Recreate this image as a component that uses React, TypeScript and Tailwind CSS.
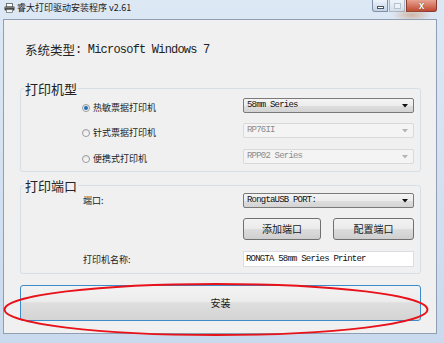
import React from "react";

const cjk = "font-['Noto_Sans_CJK_SC',sans-serif]";
const mono = "font-mono";

function PrinterIcon() {
  return (
    <svg width="11" height="10" viewBox="0 0 11 10">
      <rect x="2.5" y="0.5" width="6" height="3.5" fill="#ffffff" stroke="#5a5a5a" strokeWidth="0.8" />
      <rect x="0.5" y="3.5" width="10" height="4" rx="1" fill="#3c3c3c" />
      <rect x="1" y="4" width="9" height="1.2" fill="#7c7c7c" />
      <rect x="2.5" y="6.5" width="6" height="3" fill="#f4f4f4" stroke="#6a6a6a" strokeWidth="0.7" />
    </svg>
  );
}

function Combo({ value, disabled }: { value: string; disabled?: boolean }) {
  return (
    <div
      className={
        disabled
          ? "flex h-[15px] w-[171px] items-center justify-between rounded-[2px] border border-[#d9d9d9] bg-[#f4f4f4] pl-[3px] pr-[5px]"
          : "flex h-[15px] w-[171px] items-center justify-between rounded-[2px] border border-[#7a7a7a] bg-[linear-gradient(#f4f4f4_0%,#ececec_50%,#dfdfdf_50%,#d3d3d3_100%)] pl-[3px] pr-[5px]"
      }
    >
      <span
        className={
          disabled
            ? `${mono} text-[9px] leading-[13px] tracking-[-0.8px] text-[#8c8c8c]`
            : `${mono} text-[9px] leading-[13px] tracking-[-0.8px] text-[#111111]`
        }
      >
        {value}
      </span>
      <svg width="6" height="4" viewBox="0 0 6 4">
        <path d="M0 0h6L3 3.5z" fill={disabled ? "#b4b4b4" : "#111111"} />
      </svg>
    </div>
  );
}

function Radio({ checked, label }: { checked?: boolean; label: string }) {
  return (
    <div className="flex h-[15px] flex-1 translate-y-[2px] items-center gap-[3px] pl-[58px]">
      <span className="flex h-[8px] w-[8px] items-center justify-center rounded-full border border-[#9a9a9a] bg-[linear-gradient(#e6e6e6,#fbfbfb)]">
        {checked && <span className="h-[4px] w-[4px] rounded-full bg-[#1f6fb5]" />}
      </span>
      <span className={`${cjk} text-[9px] leading-[11px] text-[#1a1a1a]`}>{label}</span>
    </div>
  );
}

function WinButton({ children, wide }: { children: React.ReactNode; wide?: boolean }) {
  return (
    <button
      type="button"
      className={
        wide
          ? `${cjk} flex h-[22px] w-[81px] items-center justify-center rounded-[3px] border border-[#707070] bg-[linear-gradient(#f2f2f2_0%,#ebebeb_50%,#dddddd_50%,#cfcfcf_100%)] text-[10px] leading-[12px] text-[#1a1a1a]`
          : `${cjk} flex h-[22px] w-[78px] items-center justify-center rounded-[3px] border border-[#707070] bg-[linear-gradient(#f2f2f2_0%,#ebebeb_50%,#dddddd_50%,#cfcfcf_100%)] text-[10px] leading-[12px] text-[#1a1a1a]`
      }
    >
      {children}
    </button>
  );
}

export default function App() {
  return (
    <div className="relative h-[343px] w-[444px] overflow-hidden bg-linear-to-b from-[#dde8f5] to-[#c9daee]">
      {/* title bar */}
      <div className="flex h-[19px] items-start justify-between">
        <div className="flex h-[15px] items-center gap-[2px] pl-[4px]">
          <PrinterIcon />
          <span className={`${cjk} text-[9px] leading-[11px] text-[#1b1b1b]`}>睿大打印驱动安装程序 v2.61</span>
        </div>
        <div className="mr-[7px] flex gap-[1px]">
          <div className="flex h-[12px] w-[16px] items-center justify-center rounded-bl-[3px] border border-t-0 border-[#7e90a6] bg-linear-to-b from-[#eef3fa] to-[#c3d3e6]">
            <span className="mt-[3px] h-[3px] w-[7px] border border-[#4b5563] bg-white" />
          </div>
          <div className="flex h-[12px] w-[16px] items-center justify-center border border-t-0 border-[#a8b6c7] bg-linear-to-b from-[#eff4fa] to-[#d3dfec]">
            <span className="h-[6px] w-[7px] border border-[#b7c2cf] bg-[#eef2f7]" />
          </div>
          <div className="flex h-[12px] w-[31px] items-center justify-center rounded-br-[3px] border border-t-0 border-[#8a3b2f] bg-linear-to-b from-[#e6a492] to-[#c24731]">
            <span className="font-['Liberation_Sans',sans-serif] text-[10px] leading-[10px] font-bold text-white [text-shadow:0_0_1px_#4a1a12]">x</span>
          </div>
        </div>
      </div>
      <div className="pointer-events-none absolute left-[392px] top-[8px] h-[14px] w-[40px] rounded-full bg-[radial-gradient(closest-side,rgba(190,120,70,0.45),rgba(190,120,70,0))]" />

      {/* client area */}
      <div className="relative ml-[3px] flex h-[315px] w-[434px] flex-col border border-[#8f9eb2] bg-[#f0f0f0]">
        <div className="flex items-center pl-[21px] pt-[23px]">
          <span className={`${cjk} text-[12.5px] leading-[14px] text-[#222222]`}>系统类型</span>
          <span className={`${mono} text-[12px] leading-[14px] tracking-[-0.8px] text-[#222222]`}>: Microsoft Windows 7</span>
        </div>

        <fieldset className="mt-[25px] ml-[16px] w-[401px] rounded-[3px] border border-[#d5dfe5] pb-[7px] pl-[3px] pr-[6px]">
          <legend className={`${cjk} px-[1px] text-[13px] leading-[13px] text-[#222222]`}>打印机型</legend>
          <div className="mt-[3px] flex items-start">
            <Radio checked label="热敏票据打印机" />
            <Combo value="58mm Series" />
          </div>
          <div className="mt-[10px] flex items-start">
            <Radio label="针式票据打印机" />
            <Combo value="RP76II" disabled />
          </div>
          <div className="mt-[11px] flex items-start">
            <Radio label="便携式打印机" />
            <Combo value="RPP02 Series" disabled />
          </div>
        </fieldset>

        <fieldset className="mt-[7px] ml-[16px] w-[401px] rounded-[3px] border border-[#d5dfe5] pb-[6px] pl-[3px] pr-[6px]">
          <legend className={`${cjk} px-[1px] text-[13px] leading-[13px] text-[#222222]`}>打印端口</legend>
          <div className="mt-[1px] flex items-center">
            <span className={`${cjk} flex-1 pl-[59px] text-[9px] leading-[11px] text-[#1a1a1a]`}>端口:</span>
            <Combo value="RongtaUSB PORT:" />
          </div>
          <div className="mt-[10px] flex">
            <div className="flex-1" />
            <div className="flex w-[171px] justify-between">
              <WinButton>添加端口</WinButton>
              <WinButton wide>配置端口</WinButton>
            </div>
          </div>
          <div className="mt-[11px] flex items-center">
            <span className={`${cjk} flex-1 pl-[59px] text-[9px] leading-[11px] text-[#1a1a1a]`}>打印机名称:</span>
            <div className="flex h-[16px] w-[171px] items-center border border-[#dcdde3] bg-white pl-[2px]">
              <span className={`${mono} text-[9px] leading-[13px] tracking-[-0.8px] text-[#111111]`}>RONGTA 58mm Series Printer</span>
            </div>
          </div>
        </fieldset>

        <button
          type="button"
          className={`${cjk} mt-[11px] ml-[16px] flex h-[36px] w-[401px] items-center justify-center rounded-[3px] border border-[#3c8ccb] bg-[linear-gradient(#f3f3f3_0%,#ececec_45%,#dedede_50%,#d4d4d4_100%)] text-[10px] leading-[12px] text-[#1a1a1a]`}
        >
          安装
        </button>
      </div>

      {/* red annotation */}
      <svg className="pointer-events-none absolute left-0 top-0" width="444" height="343">
        <ellipse cx="216" cy="309.5" rx="211.5" ry="25.5" fill="none" stroke="#e8121a" strokeWidth="1.8" />
      </svg>
    </div>
  );
}
